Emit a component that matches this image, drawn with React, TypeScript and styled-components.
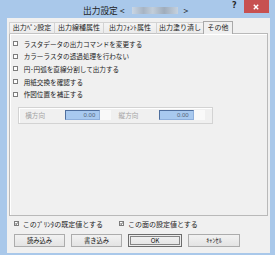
import React from 'react'
import styled, { createGlobalStyle } from 'styled-components'

const GlobalStyle = createGlobalStyle`
  html, body {
    margin: 0;
    padding: 0;
    overflow: hidden;
    background: #a9c8ea;
  }
`

const Window = styled.div`
  position: relative;
  box-sizing: border-box;
  width: 275px;
  height: 255px;
  display: flex;
  flex-direction: column;
  padding: 0 5px 2px 7px;
  background: #a9c8ea;
  font-family: 'Noto Sans CJK JP', 'Noto Sans', sans-serif;
  color: #1c1c1c;
`

const TitleBar = styled.div`
  height: 18px;
  flex: none;
  display: flex;
  align-items: flex-start;
  padding-left: 76px;
`

const Title = styled.div`
  display: flex;
  align-items: center;
  height: 9px;
  margin-top: 5.6px;
  font-size: 8.7px;
  line-height: 9px;
  color: #1e1e1e;
  white-space: nowrap;
`

const Blurred = styled.span`
  display: inline-block;
  width: 46px;
  height: 7px;
  margin: 0 6px 0 7px;
  background: linear-gradient(90deg, #c9d6e4 0%, #a7b4c3 25%, #c2ceda 45%, #9facbb 70%, #c6d2df 100%);
`

/* caption buttons sit over the title bar, pinned to the window's top-right */
const Caption = styled.div`
  position: absolute;
  top: 0;
  left: 229px;
  display: flex;
  align-items: flex-start;
  z-index: 5;
`

const Help = styled.div`
  font-family: 'DejaVu Sans', sans-serif;
  font-weight: bold;
  font-size: 8px;
  line-height: 8px;
  margin: 2px 7px 0 3px;
  color: #2a2a2a;
`

const CloseButton = styled.div`
  width: 25px;
  height: 13px;
  background: #c75050;
  display: flex;
  align-items: center;
  justify-content: center;
`

const CloseGlyph = () => (
  <svg width="6" height="6" viewBox="0 0 6 6" style={{ display: 'block' }}>
    <path d="M0.8 0.8 L5.2 5.2 M5.2 0.8 L0.8 5.2" stroke="#fff" strokeWidth="1.4" />
  </svg>
)

const Client = styled.div`
  flex: 1;
  background: #f0f0f0;
  padding: 3.5px 2px 0 2px;
  display: flex;
  flex-direction: column;
`

const TabRow = styled.div`
  display: flex;
  align-items: flex-end;
  height: 12px;
  margin-bottom: -1px;
  position: relative;
  z-index: 1;
`

const Tab = styled.div<{ $w: number; $active?: boolean }>`
  box-sizing: border-box;
  width: ${p => p.$w}px;
  height: ${p => (p.$active ? 13 : 11.5)}px;
  margin-right: -1px;
  border: 1px solid ${p => (p.$active ? '#a9a9a9' : '#d3d3d3')};
  border-bottom: ${p => (p.$active ? 'none' : '1px solid #c4c4c4')};
  background: ${p => (p.$active ? '#f0f0f0' : 'linear-gradient(#f4f4f4, #ebebeb)')};
  font-size: 7px;
  line-height: ${p => (p.$active ? 11 : 9.5)}px;
  text-align: center;
  white-space: nowrap;
  color: #1c1c1c;
`

const Pane = styled.div`
  box-sizing: border-box;
  height: 183px;
  border: 1px solid #b9b9b9;
  box-shadow: inset 1px 1px 0 #fff;
  padding: 3.7px 0 0 2.7px;
`

const Option = styled.div`
  display: flex;
  align-items: center;
  height: 12.7px;
  font-size: 6.6px;
  white-space: nowrap;
`

const Box = styled.span<{ $gap: number }>`
  box-sizing: border-box;
  width: 5px;
  height: 5px;
  margin-right: ${p => p.$gap}px;
  border: 1px solid #7c7c7c;
  background: #fdfdfd;
  display: flex;
  flex-shrink: 0;
`

const GroupBox = styled.div`
  box-sizing: border-box;
  width: 194.4px;
  height: 17.3px;
  margin: 6px 0 0 5.6px;
  border: 1px solid #d3d3d3;
  box-shadow: inset 1px 1px 0 #fff;
  display: flex;
  align-items: center;
  gap: 7.6px;
  padding-left: 6px;
`

const FieldGroup = styled.div`
  display: flex;
  align-items: center;
`

const DimLabel = styled.span`
  width: 40px;
  font-size: 6.6px;
  color: #a3a3a3;
`

const Field = styled.div`
  box-sizing: border-box;
  width: 35px;
  height: 10px;
  background: #a8c9ef;
  border-top: 1px solid #4f6f9e;
  border-left: 1px solid #4f6f9e;
  border-right: 1px solid #8fb0dc;
  border-bottom: 1px solid #8fb0dc;
  font-family: 'Liberation Sans', sans-serif;
  font-size: 6px;
  line-height: 8px;
  text-align: right;
  padding-right: 4px;
  color: #56657a;
`

const Spin = styled.div<{ $w: number }>`
  width: ${p => p.$w}px;
  height: 10px;
  background: #f9f9f9;
`

const BottomChecks = styled.div`
  display: flex;
  align-items: center;
  height: 9.5px;
  margin-top: 3.5px;
  padding-left: 5px;
`

const BottomCheck = styled.div<{ $w?: number }>`
  display: flex;
  align-items: center;
  width: ${p => (p.$w ? `${p.$w}px` : 'auto')};
  font-size: 7px;
  white-space: nowrap;
`

const ButtonRow = styled.div`
  display: flex;
  gap: 6px;
  margin-top: 5.5px;
  padding-left: 5px;
`

const Button = styled.div<{ $w: number; $default?: boolean }>`
  box-sizing: border-box;
  width: ${p => p.$w}px;
  height: 13px;
  border: 1px solid ${p => (p.$default ? '#6c6c6c' : '#acacac')};
  background: linear-gradient(#f2f2f2, #e3e3e3);
  box-shadow: ${p => (p.$default ? 'inset 0 0 0 1px #ececec, inset 0 0 0 2px #858585' : 'none')};
  display: flex;
  align-items: center;
  justify-content: center;
  font-size: 6.3px;
  color: #151515;
  white-space: nowrap;
`

const Check = () => (
  <svg width="3" height="3" viewBox="0 0 3 3" style={{ display: 'block', margin: 'auto' }}>
    <path d="M0.3 1.5 L1.2 2.5 L2.7 0.5" fill="none" stroke="#222" strokeWidth="0.8" />
  </svg>
)

const tabs = [
  { label: '出力ﾍﾟﾝ設定', w: 46 },
  { label: '出力線種属性', w: 50 },
  { label: '出力ﾌｫﾝﾄ属性', w: 54 },
  { label: '出力塗り潰し', w: 48 },
  { label: 'その他', w: 30, active: true },
]

const options = [
  'ラスタデータの出力コマンドを変更する',
  'カラーラスタの透過処理を行わない',
  '円･円弧を直線分割して出力する',
  '用紙交換を確認する',
  '作図位置を補正する',
]

export default function App() {
  return (
    <>
      <GlobalStyle />
      <Window>
        <TitleBar>
          <Title>
            出力設定 &lt;
            <Blurred />
            &gt;
          </Title>
        </TitleBar>
        <Caption>
          <Help>?</Help>
          <CloseButton>
            <CloseGlyph />
          </CloseButton>
        </Caption>
        <Client>
          <TabRow>
            {tabs.map(t => (
              <Tab key={t.label} $w={t.w} $active={t.active}>
                {t.label}
              </Tab>
            ))}
          </TabRow>
          <Pane>
            {options.map(o => (
              <Option key={o}>
                <Box $gap={6} />
                {o}
              </Option>
            ))}
            <GroupBox>
              <FieldGroup>
                <DimLabel>横方向</DimLabel>
                <Field>0.00</Field>
                <Spin $w={10.7} />
              </FieldGroup>
              <FieldGroup>
                <DimLabel>縦方向</DimLabel>
                <Field>0.00</Field>
                <Spin $w={11.7} />
              </FieldGroup>
            </GroupBox>
          </Pane>
          <BottomChecks>
            <BottomCheck $w={105.3}>
              <Box $gap={3.7}>
                <Check />
              </Box>
              このﾌﾟﾘﾝﾀの既定値とする
            </BottomCheck>
            <BottomCheck>
              <Box $gap={3.7}>
                <Check />
              </Box>
              この面の設定値とする
            </BottomCheck>
          </BottomChecks>
          <ButtonRow>
            <Button $w={51}>読み込み</Button>
            <Button $w={51}>書き込み</Button>
            <Button $w={54} $default>
              OK
            </Button>
            <Button $w={52}>ｷｬﾝｾﾙ</Button>
          </ButtonRow>
        </Client>
      </Window>
    </>
  )
}
